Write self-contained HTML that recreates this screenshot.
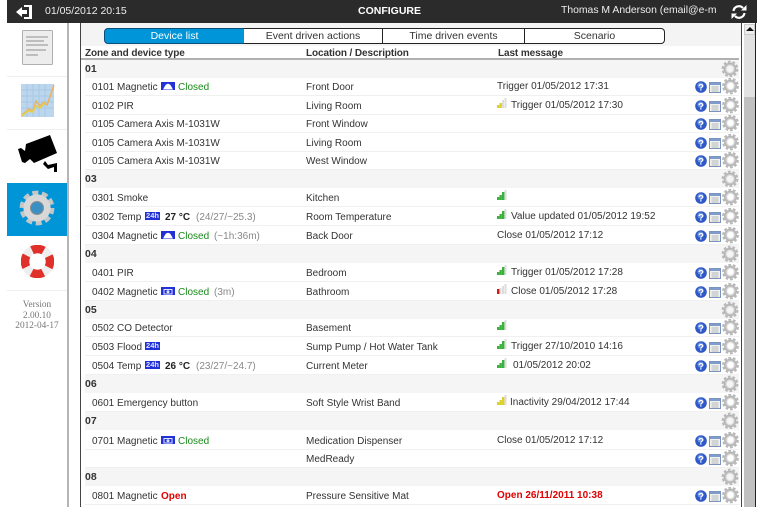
<!DOCTYPE html>
<html><head><meta charset="utf-8"><style>
html,body{margin:0;padding:0;background:#fff}
body{width:765px;height:507px;position:relative;overflow:hidden;font-family:"Liberation Sans",sans-serif;font-size:10.5px;color:#333}
div,span,svg{position:absolute}
.r{left:85px;width:654px;height:18px;border-bottom:1px solid #f0f0f0;white-space:nowrap;line-height:22px;font-size:10px}
.z{left:85px;width:654px;height:18px;background:#f5f5f5;font-weight:bold;line-height:18px;color:#333;font-size:10.5px}
.a{left:7px}.b{left:221px}.c{left:412px;line-height:20px}.c2{left:426px;line-height:20px}
.g{color:#1a8a1a}.d{color:#888}.k{font-weight:bold;color:#222}.red{color:#e00000}
.i{left:610px;top:1px;width:44px;height:17px}
.zi{left:636px;top:0;width:18px;height:17px}
.s{left:412px;top:2px;width:11px;height:10px}
.bd{top:5px;width:14px;height:8px;background:#2230d8}
.h{top:5px;width:15px;height:8px;background:#2230d8;color:#dfe4ff;font-size:7.5px;line-height:8px;text-align:center;font-weight:bold}
.tab{top:28px;height:14px;border:1px solid #222;background:#fff;text-align:center;line-height:14px;color:#333}
</style></head><body>
<svg width="0" height="0" style="left:0;top:0"><defs>
<g id="gear" fill="none"><circle cx="9" cy="9" r="7.200" stroke="#b8b8b8" stroke-width="2.400" stroke-dasharray="2.700 1.820"/><circle cx="9" cy="9" r="5" stroke="#c4c4c4" stroke-width="3"/><circle cx="9" cy="9" r="3.500" stroke="#e8e8e8" stroke-width="1"/><circle cx="9" cy="9" r="5.700" stroke="#999" stroke-width=".6" opacity=".6"/></g>
<g id="ic">
<circle cx="6" cy="9" r="5.800" fill="#2f58c8"/><circle cx="5.500" cy="7.500" r="3" fill="#6d94e4"/><text x="6" y="12.500" font-size="9.500" font-weight="bold" font-family="Liberation Sans" fill="#fff" text-anchor="middle">?</text>
<rect x="14.500" y="4.500" width="11" height="10" fill="#f2f2ec" stroke="#7c93bd"/><rect x="15" y="5" width="10" height="2" fill="#7f9ccc"/><path d="M16.500 9h7M16.500 11h7M16.500 13h7" stroke="#b0b8c0" stroke-width="1"/>
<use href="#gear" x="26.500" y="-1"/></g>
<g id="zg"><use href="#gear" x="0" y="0"/></g>
<g id="dome"><path d="M2 7.500l2.500-4.500Q7 .5 9.500 3L12 7.500z" fill="#fff"/></g>
<g id="cam"><rect x="3" y="2.500" width="8" height="4.500" fill="none" stroke="#dfe4ff"/><circle cx="7" cy="4.700" r="1.500" fill="#dfe4ff"/></g>
<g id="sg"><path d="M0 7h2.400v3H0zM2.500 5h2.400v5H2.500zM5 2h2.400v8H5z" fill="#3cb03c"/><path d="M7.500 0h2v10h-2z" fill="#ddd"/></g>
<g id="sy"><path d="M0 7h2.400v3H0zM2.500 5h2.400v5H2.500zM5 2h2.400v8H5z" fill="#dcd02c"/><path d="M7.500 0h2v10h-2z" fill="#ddd"/></g>
</defs></svg>

<div style="left:7px;top:0;width:750px;height:23px;background:#2b2b2b"></div>
<svg style="left:15px;top:4px" width="18" height="16" viewBox="0 0 18 16"><path d="M9 1h8v14H9v-2h5V3H9z" fill="#fff"/><path d="M1 8l6-5v3h5v4H7v3z" fill="#fff"/></svg>
<div style="left:45px;top:4px;color:#eee;font-size:10.5px;line-height:14px">01/05/2012 20:15</div>
<div style="left:358px;top:4px;color:#fff;font-size:10.5px;font-weight:bold;line-height:14px">CONFIGURE</div>
<div style="left:561px;top:4px;color:#eee;font-size:10.4px;line-height:14px;white-space:nowrap">Thomas M Anderson (email@e-m</div>
<svg style="left:731px;top:4px" width="16" height="16" viewBox="0 0 16 16"><path d="M2.500 7a5.500 5.500 0 0 1 9.500-3" fill="none" stroke="#fff" stroke-width="2.200"/><path d="M13.500 9a5.500 5.500 0 0 1-9.500 3" fill="none" stroke="#fff" stroke-width="2.200"/><path d="M10 6.500h5.500V1zM6 9.500H.5V15z" fill="#fff"/></svg>

<div style="left:67px;top:23px;width:2px;height:484px;background:#b5b5b5"></div>
<div style="left:80px;top:23px;width:1px;height:484px;background:#444"></div>
<div style="left:741px;top:23px;width:1px;height:484px;background:#444"></div>
<div style="left:755px;top:23px;width:1px;height:484px;background:#222"></div>
<div style="left:81px;top:23px;width:660px;height:23px;background:#f4f4f4"></div>
<div style="left:742px;top:23px;width:13px;height:484px;background:#fff"></div>
<div style="left:744px;top:24px;width:11px;height:11px;background:#eee;border:1px solid #ccc;box-sizing:border-box"></div>
<svg style="left:746px;top:27px" width="8" height="5"><path d="M0 4L4 0l4 4z" fill="#111"/></svg>
<div style="left:744px;top:35px;width:11px;height:62px;background:#e2e2e2"></div>
<div style="left:744px;top:97px;width:11px;height:410px;background:#c0c0c0"></div>

<svg style="left:22px;top:30px" width="31" height="35" viewBox="0 0 31 35"><rect x=".5" y=".5" width="30" height="34" rx="1" fill="#ededed" stroke="#b0b0b0"/><path d="M4 7h22M4 11h18M4 15h22M4 20h20M4 25h12" stroke="#8f8f8f"/></svg>
<div style="left:7px;top:76px;width:60px;height:1px;background:#efefef"></div>
<svg style="left:21px;top:84px" width="34" height="34" viewBox="0 0 34 34"><rect width="33" height="33" fill="#bcd6ee"/><path d="M0 6h33M0 12h33M0 18h33M0 24h33M6 0v33M12 0v33M18 0v33M24 0v33" stroke="#a8c8e6"/><path d="M1 31L8 25l4 2 3-10 4 5 4-4 3 3L33 1" fill="none" stroke="#eeb25a" stroke-width="1.500"/><path d="M1 32l6-5 5 1 3-6 4 2 5-5" fill="none" stroke="#e4d24a" stroke-width="1.500"/></svg>
<div style="left:7px;top:129px;width:60px;height:1px;background:#efefef"></div>
<svg style="left:12px;top:130px" width="60" height="50" viewBox="0 0 60 50"><path d="M14 14L38 5l7 18-23 10-4-4-5 4-3-1-4-13 3-1 4 3z" fill="#000"/><path d="M33 31l3 4 9-2v9h-3v-5l-6 2-5-5z" fill="#000"/></svg>
<div style="left:7px;top:183px;width:60px;height:53px;background:#0095d6"></div>
<svg style="left:19px;top:190px" width="36" height="36" viewBox="0 0 18 18" fill="none"><circle cx="9" cy="9" r="7.400" stroke="#c6c6c6" stroke-width="2.600" stroke-dasharray="2.900 1.750"/><circle cx="9" cy="9" r="5" stroke="#d8d8d8" stroke-width="3.600"/><circle cx="9" cy="9" r="3.200" stroke="#8d8d8d" stroke-width=".6"/><circle cx="9" cy="9" r="2.800" fill="#3a8fc4"/></svg>
<svg style="left:21px;top:245px" width="33" height="33" viewBox="0 0 33 33" fill="none"><circle cx="16.500" cy="16.500" r="12.500" stroke="#eee" stroke-width="8.500"/><circle cx="16.500" cy="16.500" r="12.500" stroke="#e0302a" stroke-width="8.500" stroke-dasharray="12 7.630" stroke-dashoffset="6"/></svg>
<div style="left:7px;top:290px;width:60px;height:1px;background:#efefef"></div>
<div style="left:7px;top:300px;width:60px;text-align:center;font:9.3px/10.5px 'Liberation Serif',serif;color:#777">Version<br>2.00.10<br>2012-04-17</div>

<div class="tab" style="left:104px;width:139px;background:#0095d9;color:#fff;border-radius:4px 0 0 4px;border-color:#0b4f78">Device list</div>
<div class="tab" style="left:244px;width:138px;border-left:0">Event driven actions</div>
<div class="tab" style="left:383px;width:141px;border-left:0;border-right:1px solid #222">Time driven events</div>
<div class="tab" style="left:525px;width:139px;border-left:0;border-radius:0 4px 4px 0">Scenario</div>

<div style="left:85px;top:48px;font-weight:bold;font-size:10px;line-height:11px;letter-spacing:-.1px">Zone and device type</div>
<div style="left:306px;top:48px;font-weight:bold;font-size:10px;line-height:11px;letter-spacing:-.1px">Location / Description</div>
<div style="left:498px;top:48px;font-weight:bold;font-size:10px;line-height:11px;letter-spacing:-.1px">Last message</div>
<div style="left:81px;top:58px;width:658px;height:2px;background:#b0b0b0"></div>

<div class="z" style="top:60px">01<svg class="zi"><use href="#zg"/></svg></div>
<div class="r" style="top:77px"><span class="a">0101 Magnetic</span><span class="bd" style="left:76px"><svg width="14" height="8"><use href="#dome"/></svg></span><span class="a g" style="left:93px">Closed</span><span class="b">Front Door</span><span class="c">Trigger 01/05/2012 17:31</span><svg class="i"><use href="#ic"/></svg></div>
<div class="r" style="top:96px"><span class="a">0102 PIR</span><span class="b">Living Room</span><svg class="s"><path d="M0 7h2.400v3H0zM2.500 5h2.400v5H2.500z" fill="#dcd02c"/><path d="M5 2h2v8H5zM7.500 0h2v10h-2z" fill="#ddd"/></svg><span class="c2">Trigger 01/05/2012 17:30</span><svg class="i"><use href="#ic"/></svg></div>
<div class="r" style="top:114px"><span class="a">0105 Camera Axis M-1031W</span><span class="b">Front Window</span><svg class="i"><use href="#ic"/></svg></div>
<div class="r" style="top:133px"><span class="a">0105 Camera Axis M-1031W</span><span class="b">Living Room</span><svg class="i"><use href="#ic"/></svg></div>
<div class="r" style="top:151px"><span class="a">0105 Camera Axis M-1031W</span><span class="b">West Window</span><svg class="i"><use href="#ic"/></svg></div>

<div class="z" style="top:170px">03<svg class="zi"><use href="#zg"/></svg></div>
<div class="r" style="top:188px"><span class="a">0301 Smoke</span><span class="b">Kitchen</span><svg class="s"><use href="#sg"/></svg><svg class="i"><use href="#ic"/></svg></div>
<div class="r" style="top:207px"><span class="a">0302 Temp</span><span class="h" style="left:60px">24h</span><span class="a k" style="left:80px">27 °C</span><span class="a d" style="left:111px">(24/27/~25.3)</span><span class="b">Room Temperature</span><svg class="s"><use href="#sg"/></svg><span class="c2">Value updated 01/05/2012 19:52</span><svg class="i"><use href="#ic"/></svg></div>
<div class="r" style="top:226px"><span class="a">0304 Magnetic</span><span class="bd" style="left:76px"><svg width="14" height="8"><use href="#dome"/></svg></span><span class="a g" style="left:93px">Closed</span><span class="a d" style="left:129px">(~1h:36m)</span><span class="b">Back Door</span><span class="c">Close 01/05/2012 17:12</span><svg class="i"><use href="#ic"/></svg></div>

<div class="z" style="top:245px">04<svg class="zi"><use href="#zg"/></svg></div>
<div class="r" style="top:263px"><span class="a">0401 PIR</span><span class="b">Bedroom</span><svg class="s"><use href="#sg"/></svg><span class="c2">Trigger 01/05/2012 17:28</span><svg class="i"><use href="#ic"/></svg></div>
<div class="r" style="top:282px"><span class="a">0402 Magnetic</span><span class="bd" style="left:76px"><svg width="14" height="8"><use href="#cam"/></svg></span><span class="a g" style="left:93px">Closed</span><span class="a d" style="left:129px">(3m)</span><span class="b">Bathroom</span><svg class="s"><path d="M0 5h2.400v5H0z" fill="#d01818"/><path d="M2.500 4h2v6h-2zM5 2h2v8H5zM7.500 0h2v10h-2z" fill="#ddd"/></svg><span class="c2">Close 01/05/2012 17:28</span><svg class="i"><use href="#ic"/></svg></div>

<div class="z" style="top:301px">05<svg class="zi"><use href="#zg"/></svg></div>
<div class="r" style="top:318px"><span class="a">0502 CO Detector</span><span class="b">Basement</span><svg class="s"><use href="#sg"/></svg><svg class="i"><use href="#ic"/></svg></div>
<div class="r" style="top:337px"><span class="a">0503 Flood</span><span class="h" style="left:60px">24h</span><span class="b">Sump Pump / Hot Water Tank</span><svg class="s"><use href="#sg"/></svg><span class="c2">Trigger 27/10/2010 14:16</span><svg class="i"><use href="#ic"/></svg></div>
<div class="r" style="top:356px"><span class="a">0504 Temp</span><span class="h" style="left:60px">24h</span><span class="a k" style="left:80px">26 °C</span><span class="a d" style="left:111px">(23/27/~24.7)</span><span class="b">Current Meter</span><svg class="s"><use href="#sg"/></svg><span class="c2" style="left:428px">01/05/2012 20:02</span><svg class="i"><use href="#ic"/></svg></div>

<div class="z" style="top:375px">06<svg class="zi"><use href="#zg"/></svg></div>
<div class="r" style="top:393px"><span class="a">0601 Emergency button</span><span class="b">Soft Style Wrist Band</span><svg class="s"><use href="#sy"/></svg><span class="c2" style="left:425px">Inactivity 29/04/2012 17:44</span><svg class="i"><use href="#ic"/></svg></div>

<div class="z" style="top:412px">07<svg class="zi"><use href="#zg"/></svg></div>
<div class="r" style="top:431px"><span class="a">0701 Magnetic</span><span class="bd" style="left:76px"><svg width="14" height="8"><use href="#cam"/></svg></span><span class="a g" style="left:93px">Closed</span><span class="b">Medication Dispenser</span><span class="c">Close 01/05/2012 17:12</span><svg class="i"><use href="#ic"/></svg></div>
<div class="r" style="top:449px"><span class="b">MedReady</span><svg class="i"><use href="#ic"/></svg></div>

<div class="z" style="top:468px">08<svg class="zi"><use href="#zg"/></svg></div>
<div class="r" style="top:486px"><span class="a">0801 Magnetic</span><span class="a red" style="left:76px;font-weight:bold">Open</span><span class="b">Pressure Sensitive Mat</span><span class="c red" style="font-weight:bold">Open 26/11/2011 10:38</span><svg class="i"><use href="#ic"/></svg></div>
</body></html>
